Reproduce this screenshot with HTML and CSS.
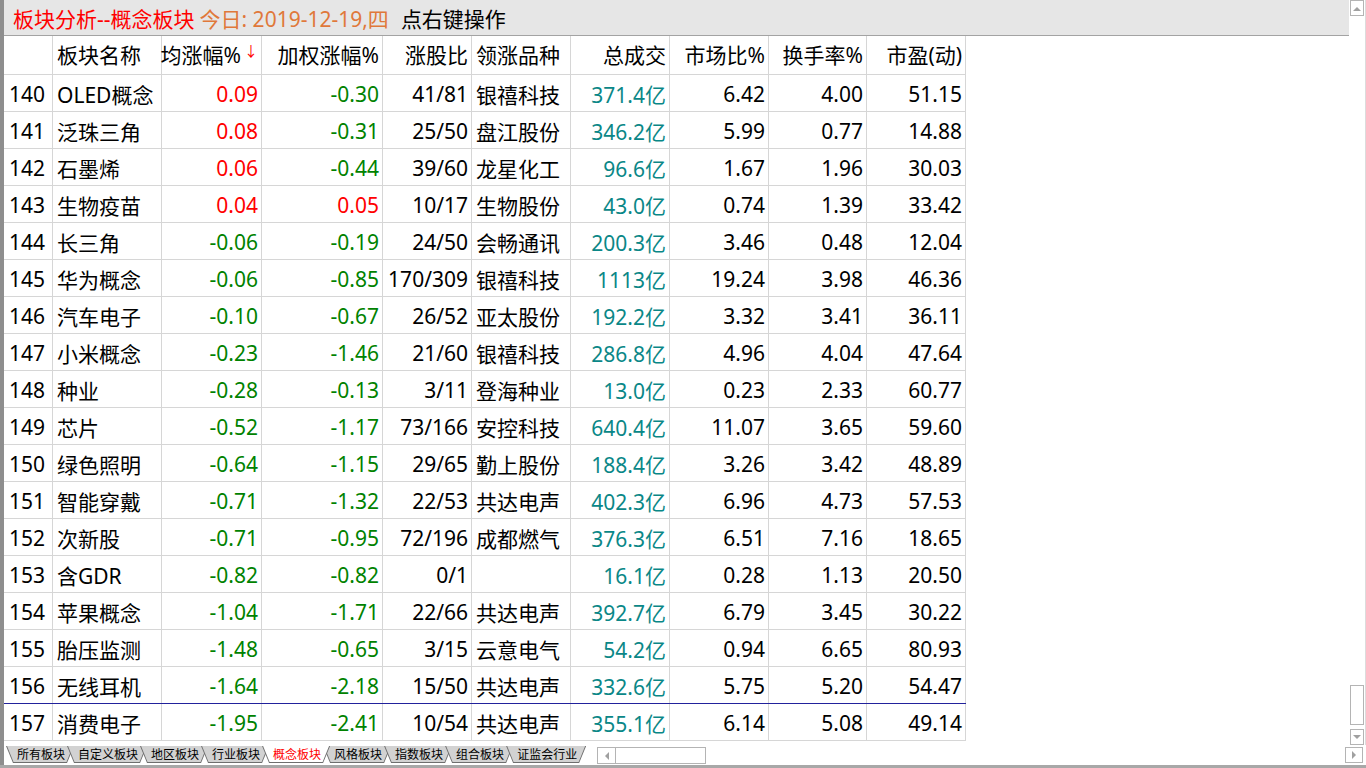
FILE: index.html
```html
<!DOCTYPE html>
<html lang="zh-CN">
<head>
<meta charset="utf-8">
<title>板块分析--概念板块</title>
<link rel="stylesheet" href="styles.css">
</head>
<body>
<div class="app">
  <div class="frame">
    <div class="main">
      <div class="content">
        <div class="titlebar">
          <span class="t-red">板块分析--概念板块</span>
          <span class="t-orange">今日: 2019-12-19,四</span>
          <span class="t-black">点右键操作</span>
        </div>
        <div class="grid">
          <div class="row head">
            <div class="c"></div>
            <div class="c l">板块名称</div>
            <div class="c r">均涨幅%<span class="arrow">↓</span></div>
            <div class="c r">加权涨幅%</div>
            <div class="c r">涨股比</div>
            <div class="c l">领涨品种</div>
            <div class="c r">总成交</div>
            <div class="c r">市场比%</div>
            <div class="c r">换手率%</div>
            <div class="c r">市盈(动)</div>
          </div>
          <div class="row"><div class="c l">140</div><div class="c l">OLED概念</div><div class="c r up">0.09</div><div class="c r dn">-0.30</div><div class="c r">41/81</div><div class="c l">银禧科技</div><div class="c r tl">371.4亿</div><div class="c r">6.42</div><div class="c r">4.00</div><div class="c r">51.15</div></div>
          <div class="row"><div class="c l">141</div><div class="c l">泛珠三角</div><div class="c r up">0.08</div><div class="c r dn">-0.31</div><div class="c r">25/50</div><div class="c l">盘江股份</div><div class="c r tl">346.2亿</div><div class="c r">5.99</div><div class="c r">0.77</div><div class="c r">14.88</div></div>
          <div class="row"><div class="c l">142</div><div class="c l">石墨烯</div><div class="c r up">0.06</div><div class="c r dn">-0.44</div><div class="c r">39/60</div><div class="c l">龙星化工</div><div class="c r tl">96.6亿</div><div class="c r">1.67</div><div class="c r">1.96</div><div class="c r">30.03</div></div>
          <div class="row"><div class="c l">143</div><div class="c l">生物疫苗</div><div class="c r up">0.04</div><div class="c r up">0.05</div><div class="c r">10/17</div><div class="c l">生物股份</div><div class="c r tl">43.0亿</div><div class="c r">0.74</div><div class="c r">1.39</div><div class="c r">33.42</div></div>
          <div class="row"><div class="c l">144</div><div class="c l">长三角</div><div class="c r dn">-0.06</div><div class="c r dn">-0.19</div><div class="c r">24/50</div><div class="c l">会畅通讯</div><div class="c r tl">200.3亿</div><div class="c r">3.46</div><div class="c r">0.48</div><div class="c r">12.04</div></div>
          <div class="row"><div class="c l">145</div><div class="c l">华为概念</div><div class="c r dn">-0.06</div><div class="c r dn">-0.85</div><div class="c r">170/309</div><div class="c l">银禧科技</div><div class="c r tl">1113亿</div><div class="c r">19.24</div><div class="c r">3.98</div><div class="c r">46.36</div></div>
          <div class="row"><div class="c l">146</div><div class="c l">汽车电子</div><div class="c r dn">-0.10</div><div class="c r dn">-0.67</div><div class="c r">26/52</div><div class="c l">亚太股份</div><div class="c r tl">192.2亿</div><div class="c r">3.32</div><div class="c r">3.41</div><div class="c r">36.11</div></div>
          <div class="row"><div class="c l">147</div><div class="c l">小米概念</div><div class="c r dn">-0.23</div><div class="c r dn">-1.46</div><div class="c r">21/60</div><div class="c l">银禧科技</div><div class="c r tl">286.8亿</div><div class="c r">4.96</div><div class="c r">4.04</div><div class="c r">47.64</div></div>
          <div class="row"><div class="c l">148</div><div class="c l">种业</div><div class="c r dn">-0.28</div><div class="c r dn">-0.13</div><div class="c r">3/11</div><div class="c l">登海种业</div><div class="c r tl">13.0亿</div><div class="c r">0.23</div><div class="c r">2.33</div><div class="c r">60.77</div></div>
          <div class="row"><div class="c l">149</div><div class="c l">芯片</div><div class="c r dn">-0.52</div><div class="c r dn">-1.17</div><div class="c r">73/166</div><div class="c l">安控科技</div><div class="c r tl">640.4亿</div><div class="c r">11.07</div><div class="c r">3.65</div><div class="c r">59.60</div></div>
          <div class="row"><div class="c l">150</div><div class="c l">绿色照明</div><div class="c r dn">-0.64</div><div class="c r dn">-1.15</div><div class="c r">29/65</div><div class="c l">勤上股份</div><div class="c r tl">188.4亿</div><div class="c r">3.26</div><div class="c r">3.42</div><div class="c r">48.89</div></div>
          <div class="row"><div class="c l">151</div><div class="c l">智能穿戴</div><div class="c r dn">-0.71</div><div class="c r dn">-1.32</div><div class="c r">22/53</div><div class="c l">共达电声</div><div class="c r tl">402.3亿</div><div class="c r">6.96</div><div class="c r">4.73</div><div class="c r">57.53</div></div>
          <div class="row"><div class="c l">152</div><div class="c l">次新股</div><div class="c r dn">-0.71</div><div class="c r dn">-0.95</div><div class="c r">72/196</div><div class="c l">成都燃气</div><div class="c r tl">376.3亿</div><div class="c r">6.51</div><div class="c r">7.16</div><div class="c r">18.65</div></div>
          <div class="row"><div class="c l">153</div><div class="c l">含GDR</div><div class="c r dn">-0.82</div><div class="c r dn">-0.82</div><div class="c r">0/1</div><div class="c l"></div><div class="c r tl">16.1亿</div><div class="c r">0.28</div><div class="c r">1.13</div><div class="c r">20.50</div></div>
          <div class="row"><div class="c l">154</div><div class="c l">苹果概念</div><div class="c r dn">-1.04</div><div class="c r dn">-1.71</div><div class="c r">22/66</div><div class="c l">共达电声</div><div class="c r tl">392.7亿</div><div class="c r">6.79</div><div class="c r">3.45</div><div class="c r">30.22</div></div>
          <div class="row"><div class="c l">155</div><div class="c l">胎压监测</div><div class="c r dn">-1.48</div><div class="c r dn">-0.65</div><div class="c r">3/15</div><div class="c l">云意电气</div><div class="c r tl">54.2亿</div><div class="c r">0.94</div><div class="c r">6.65</div><div class="c r">80.93</div></div>
          <div class="row sel-above"><div class="c l">156</div><div class="c l">无线耳机</div><div class="c r dn">-1.64</div><div class="c r dn">-2.18</div><div class="c r">15/50</div><div class="c l">共达电声</div><div class="c r tl">332.6亿</div><div class="c r">5.75</div><div class="c r">5.20</div><div class="c r">54.47</div></div>
          <div class="row"><div class="c l">157</div><div class="c l">消费电子</div><div class="c r dn">-1.95</div><div class="c r dn">-2.41</div><div class="c r">10/54</div><div class="c l">共达电声</div><div class="c r tl">355.1亿</div><div class="c r">6.14</div><div class="c r">5.08</div><div class="c r">49.14</div></div>
        </div>
      </div>
      <div class="vscroll">
        <div class="sbtn"><svg width="8" height="5" viewBox="0 0 8 5"><path d="M0 5 L4 1 L8 5 Z" fill="#a0a0a0"/></svg></div>
        <div class="vspace"></div>
        <div class="thumb"></div>
        <div class="sbtn down"><svg width="8" height="5" viewBox="0 0 8 5"><path d="M0 0 L4 4 L8 0 Z" fill="#a0a0a0"/></svg></div>
      </div>
    </div>
    <div class="bottombar">
      <div class="tabs">
        <div class="tab"><span>所有板块</span></div>
        <div class="tab"><span>自定义板块</span></div>
        <div class="tab"><span>地区板块</span></div>
        <div class="tab"><span>行业板块</span></div>
        <div class="tab active"><span>概念板块</span></div>
        <div class="tab"><span>风格板块</span></div>
        <div class="tab"><span>指数板块</span></div>
        <div class="tab"><span>组合板块</span></div>
        <div class="tab"><span>证监会行业</span></div>
      </div>
      <div class="hscroll">
        <div class="hbtn"><svg width="5" height="8" viewBox="0 0 5 8"><path d="M5 0 L1 4 L5 8 Z" fill="#a0a0a0"/></svg></div>
        <div class="htrack"></div>
      </div>
      <div class="rbtn"><svg width="5" height="8" viewBox="0 0 5 8"><path d="M0 0 L4 4 L0 8 Z" fill="#a0a0a0"/></svg></div>
    </div>
  </div>
  <div class="bottomline"></div>
</div>
</body>
</html>
```
FILE: styles.css
```css
html, body {
  margin: 0;
  padding: 0;
  background: #ffffff;
}
body {
  font-family: "Noto Sans", "Noto Sans CJK SC", sans-serif;
  color: #000;
}
.app {
  width: 1366px;
  height: 768px;
  display: flex;
  flex-direction: column;
  overflow: hidden;
}
.frame {
  flex: 1;
  display: flex;
  flex-direction: column;
  border-left: 4px solid #8e8e8e;
  min-height: 0;
}
.main {
  height: 745px;
  flex-shrink: 0;
  display: flex;
}
.content {
  flex: 1;
  min-width: 0;
  display: flex;
  flex-direction: column;
  overflow: hidden;
}
.titlebar {
  flex-shrink: 0;
  height: 35px;
  background: #e6e6e6;
  border-bottom: 1px solid #a3a3a3;
  display: flex;
  align-items: center;
  padding-left: 9px;
  font-size: 21px;
  white-space: nowrap;
}
.t-red { color: #ff0000; }
.t-orange { color: #e0783a; margin-left: 5px; }
.t-black { color: #000; margin-left: 12px; }

.grid {
  flex-shrink: 0;
  display: flex;
  flex-direction: column;
}
.row {
  flex-shrink: 0;
  box-sizing: border-box;
  display: grid;
  grid-template-columns: 49px 109px 100px 121px 89px 99px 99px 99px 98px 99px;
  width: 962px;
  height: 37px;
  border-bottom: 1px solid #d6d6d6;
  font-size: 21px;
}
.row.head {
  height: 39px;
}
.row.head .c {
  padding-top: 0;
  padding-bottom: 2px;
}
.row.sel-above {
  border-bottom-color: #22229c;
}
.c {
  box-sizing: border-box;
  border-right: 1px solid #d6d6d6;
  display: flex;
  align-items: center;
  white-space: nowrap;
  padding: 1px 3px 0 4px;
  min-width: 0;
}
.c.l { justify-content: flex-start; }
.c.r { justify-content: flex-end; }
.row .c:first-child { padding-left: 5px; }
.up { color: #ff0000; }
.dn { color: #008200; }
.tl { color: #0a8787; }
.arrow {
  color: #ff0000;
  font-size: 14px;
  margin-left: 3px;
  margin-bottom: 8px;
}

.vscroll {
  width: 17px;
  box-sizing: border-box;
  padding-left: 1px;
  border-right: 1px solid #dcdcdc;
  display: flex;
  flex-direction: column;
}
.sbtn {
  width: 14px;
  height: 16px;
  box-sizing: border-box;
  border: 1px solid #b4b4b4;
  display: flex;
  align-items: center;
  justify-content: center;
  background: #fff;
}
.vspace { flex: 1; }
.thumb {
  width: 14px;
  height: 40px;
  box-sizing: border-box;
  border: 1px solid #b4b4b4;
  margin-bottom: 4px;
}

.bottombar {
  height: 20px;
  flex-shrink: 0;
  display: flex;
  align-items: flex-start;
  padding-right: 3px;
}
.tabs {
  display: flex;
  margin-top: 1px;
  padding-left: 2px;
}
.tab {
  position: relative;
  height: 17px;
  padding: 0 9px 0 11px;
  margin-left: -7px;
  font-size: 12px;
  color: #000;
  background: #6e6e6e;
  clip-path: polygon(0 0, 100% 0, calc(100% - 7px) 100%, 7px 100%);
}
.tab:first-child { margin-left: 0; }
.tab::before {
  content: "";
  position: absolute;
  left: 1px;
  right: 1px;
  top: 0;
  bottom: 1px;
  background: #d2d2d2;
  clip-path: polygon(0 0, 100% 0, calc(100% - 6.5px) 100%, 6.5px 100%);
}
.tab span {
  position: relative;
  display: block;
  height: 17px;
  line-height: 17px;
}
.tab.active {
  z-index: 5;
  color: #ff0000;
}
.tab.active::before { background: #ffffff; }

.hscroll {
  margin-left: 11px;
  margin-top: 2px;
  width: 109px;
  height: 17px;
  box-sizing: border-box;
  border: 1px solid #b4b4b4;
  display: flex;
}
.hbtn {
  width: 17px;
  border-right: 1px solid #b4b4b4;
  display: flex;
  align-items: center;
  justify-content: center;
}
.htrack { flex: 1; }
.rbtn {
  margin-left: auto;
  margin-top: 2px;
  width: 18px;
  height: 16px;
  box-sizing: border-box;
  border: 1px solid #b4b4b4;
  display: flex;
  align-items: center;
  justify-content: center;
}
.bottomline {
  height: 3px;
  flex-shrink: 0;
  background: #a8a8a8;
}
```
